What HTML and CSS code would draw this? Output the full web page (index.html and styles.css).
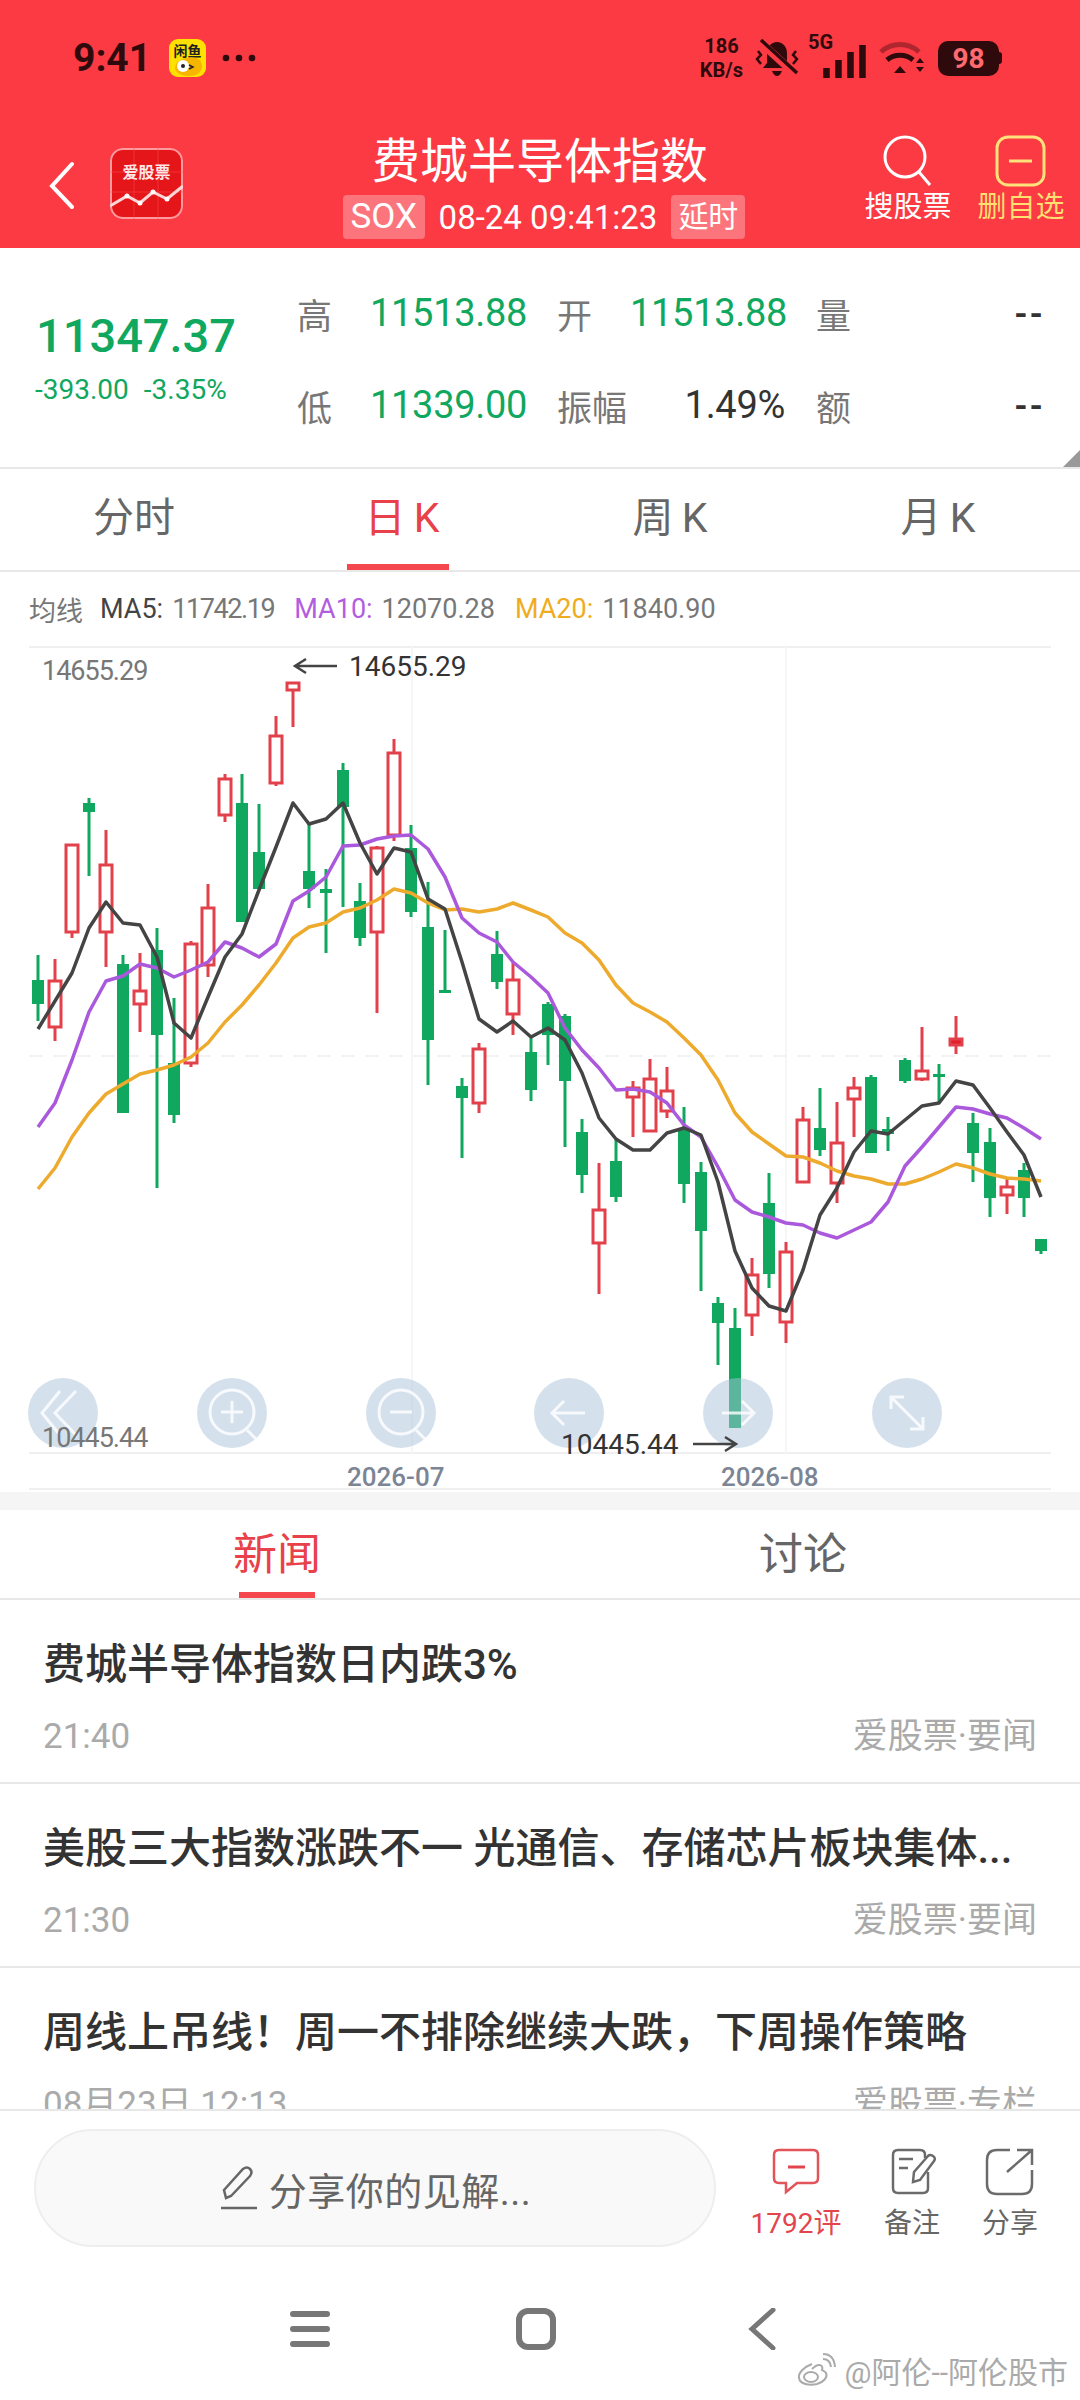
FILE: index.html

```html
<!DOCTYPE html>
<html lang="zh-CN">
<head>
    <meta charset="UTF-8">
    <meta name="viewport" content="width=device-width, initial-scale=1.0">
    <title>费城半导体指数</title>
    <link rel="stylesheet" href="styles.css">
</head>
<body>
<div class="page">
    <header class="top">
        <div class="status">
            <span class="clock">9:41</span>
            <svg class="app-icon" width="37" height="38" viewBox="0 0 37 38">
                <rect width="37" height="38" rx="9" fill="#ffe100"/>
                <text class="app-name" x="18.5" y="17">闲鱼</text>
                <path d="M6 30q0-9 11-11 9-2 14 2 4 6 0 12-3 4-12 4-10 0-13-7z" fill="#f7b500"/>
                <ellipse cx="14" cy="27" rx="6" ry="6" fill="#fff"/>
                <circle cx="14" cy="27" r="2" fill="#222"/>
                <path d="M20 26l4 2-4 2" stroke="#222" stroke-width="1.5" fill="none"/>
            </svg>
            <svg class="dots" width="34" height="8" viewBox="0 0 34 8">
                <circle cx="4" cy="4" r="3.3"/><circle cx="17" cy="4" r="3.3"/><circle cx="30" cy="4" r="3.3"/>
            </svg>
            <div class="status-right">
                <span class="speed">186<br>KB/s</span>
                <svg class="bell" width="44" height="40" viewBox="0 0 44 40">
                    <path d="M22 4c-6 0-10 5-10 11v10l-4 5h28l-4-5V15c0-6-4-11-10-11z" fill="#2f0a0c"/>
                    <path d="M17 33h10q-2 5-5 5t-5-5z" fill="#2f0a0c"/>
                    <path d="M4 3l36 33" stroke="#fb3a44" stroke-width="8"/>
                    <path d="M6 2l36 33" stroke="#2f0a0c" stroke-width="3.5"/>
                    <path d="M3 13l3 4-4 4 4 5M41 13l-3 4 4 4-4 5" stroke="#2f0a0c" stroke-width="2.5" fill="none"/>
                </svg>
                <div class="signal">
                    <span class="net">5G</span>
                    <svg width="43" height="33" viewBox="0 0 43 33">
                        <path d="M3.500 23v10M15.500 15v18M27.500 7v26M39.500 0v33" stroke="#2f0a0c" stroke-width="6.500"/>
                    </svg>
                </div>
                <svg class="wifi" width="46" height="34" viewBox="0 0 46 34">
                    <path d="M2 11a28 28 0 0 1 38 0" stroke="#b0262e" stroke-width="5" fill="none"/>
                    <path d="M8 19a20 20 0 0 1 26 0" stroke="#2f0a0c" stroke-width="5" fill="none"/>
                    <path d="M15 32l6-7 6 7z" fill="#2f0a0c"/>
                    <path d="M37 22l4-5 4 5zM37 26l4 5 4-5z" fill="#2f0a0c"/>
                </svg>
                <div class="battery"><span>98</span></div>
            </div>
        </div>
        <div class="bar">
            <div class="bar-left">
                <svg width="26" height="48" viewBox="0 0 26 48">
                    <path d="M23 3L3 25l20 21" stroke="#fff" stroke-width="4" fill="none" stroke-linecap="round"/>
                </svg>
                <div class="logo">
                    <svg class="logo-line" width="73" height="71" viewBox="0 0 73 71">
                        <path d="M0 24h73M0 44h73M24 0v71M48 0v71" stroke="#ff4a4a" stroke-width="1" opacity="0.5"/>
                        <path d="M0 58l17-10 13 7 13-11 14 7 16-13" stroke="#ffd6d6" stroke-width="3" fill="none"/>
                        <circle cx="17" cy="48" r="2.500" fill="#fff"/><circle cx="30" cy="55" r="2.500" fill="#fff"/>
                        <circle cx="43" cy="44" r="2.500" fill="#fff"/><circle cx="57" cy="51" r="2.500" fill="#fff"/>
                    </svg>
                    <span>爱股票</span>
                </div>
            </div>
            <div class="bar-title">
                <h1>费城半导体指数</h1>
                <div class="bar-meta">
                    <span class="tag tag-code">SOX</span>
                    <span class="stamp">08-24 09:41:23</span>
                    <span class="tag">延时</span>
                </div>
            </div>
            <div class="bar-actions">
                <div class="action">
                    <svg width="54" height="54" viewBox="0 0 54 54">
                        <circle cx="24" cy="23" r="20" stroke="#fff" stroke-width="3" fill="none"/>
                        <path d="M38 38l11 13" stroke="#fff" stroke-width="3"/>
                    </svg>
                    <span>搜股票</span>
                </div>
                <div class="action action-on">
                    <svg width="54" height="54" viewBox="0 0 54 54">
                        <rect x="3" y="3" width="47" height="48" rx="11" stroke="#ffe27a" stroke-width="3" fill="none"/>
                        <path d="M15 27h23" stroke="#ffe27a" stroke-width="3"/>
                    </svg>
                    <span>删自选</span>
                </div>
            </div>
        </div>
    </header>

    <section class="quote">
        <div class="price">
            <div class="price-now">11347.37</div>
            <div class="price-change"><span>-393.00</span><span>-3.35%</span></div>
        </div>
        <div class="stats">
            <span class="stat-label">高</span><span class="stat-val green">11513.88</span>
            <span class="stat-label">开</span><span class="stat-val green right">11513.88</span>
            <span class="stat-label stat-last">量</span><span class="stat-dash">--</span>
            <span class="stat-label">低</span><span class="stat-val green">11339.00</span>
            <span class="stat-label">振幅</span><span class="stat-val right">1.49%</span>
            <span class="stat-label stat-last">额</span><span class="stat-dash">--</span>
        </div>
        <i class="corner"></i>
    </section>

    <nav class="periods">
        <a>分时</a>
        <a class="on">日 K</a>
        <a>周 K</a>
        <a>月 K</a>
    </nav>

    <div class="legend">
        <span class="legend-name">均线</span>
        <span class="ma"><b>MA5:</b><span class="tight">11742.19</span></span>
        <span class="ma ma10"><b>MA10:</b><span>12070.28</span></span>
        <span class="ma ma20"><b>MA20:</b><span>11840.90</span></span>
    </div>

    <svg class="chart" width="1080" height="846" viewBox="0 646 1080 846">
        <g class="grid">
            <path d="M29 647H1051M29 1453H1051M29 1489H1051"/>
            <path class="grid-v" d="M412 647V1453M786 647V1453"/>
            <path class="grid-mid" d="M29 1056H1051"/>
        </g>

        <path class="wick-down" d="M38 955V1021M89 798V876M123 955V1113M157 928V1188M174 998V1123M242 774V922M259 804V889M309 824V908M326 869V953M343 763V907M360 883V946M411 825V917M428 882V1085M445 930V993M462 1078V1158M497 931V989M531 1036V1101M548 1002V1065M565 1014V1147M582 1119V1193M616 1140V1202M684 1107V1203M701 1162V1291M718 1297V1365M735 1308V1428M769 1173V1288M820 1088V1156M871 1075V1153M888 1117V1151M905 1058V1083M939 1064V1103M973 1113V1182M990 1128V1217M1024 1163V1217M1041 1239V1254"/>
        <g class="body-down">
            <rect x="32" y="980" width="12" height="24"/><rect x="83" y="803" width="12" height="9"/>
            <rect x="117" y="964" width="12" height="149"/><rect x="151" y="950" width="12" height="85"/>
            <rect x="168" y="1063" width="12" height="52"/><rect x="236" y="803" width="12" height="119"/>
            <rect x="253" y="852" width="12" height="37"/><rect x="303" y="871" width="12" height="18"/>
            <rect x="320" y="889" width="12" height="4"/><rect x="337" y="770" width="12" height="37"/>
            <rect x="354" y="901" width="12" height="37"/><rect x="405" y="848" width="12" height="64"/>
            <rect x="422" y="927" width="12" height="113"/><rect x="439" y="990" width="12" height="3"/>
            <rect x="456" y="1086" width="12" height="12"/><rect x="491" y="954" width="12" height="28"/>
            <rect x="525" y="1052" width="12" height="38"/><rect x="542" y="1004" width="12" height="31"/>
            <rect x="559" y="1016" width="12" height="65"/><rect x="576" y="1132" width="12" height="43"/>
            <rect x="610" y="1161" width="12" height="36"/><rect x="678" y="1128" width="12" height="56"/>
            <rect x="695" y="1172" width="12" height="59"/><rect x="712" y="1303" width="12" height="20"/>
            <rect x="729" y="1328" width="12" height="100"/><rect x="763" y="1203" width="12" height="71"/>
            <rect x="814" y="1128" width="12" height="22"/><rect x="865" y="1077" width="12" height="76"/>
            <rect x="882" y="1129" width="12" height="5"/><rect x="899" y="1060" width="12" height="21"/>
            <rect x="933" y="1074" width="12" height="3"/><rect x="967" y="1123" width="12" height="30"/>
            <rect x="984" y="1142" width="12" height="56"/><rect x="1018" y="1170" width="12" height="28"/>
            <rect x="1035" y="1239" width="12" height="12"/>
        </g>

        <path class="wick-up" d="M55 959V1041M72 932V938M106 830V967M140 953V1032M191 941V1067M208 884V977M225 774V822M276 716V786M293 682V727M377 846V1013M394 739V841M479 1043V1113M513 963V1035M599 1163V1294M633 1081V1137M650 1059V1131M667 1067V1118M752 1258V1336M786 1242V1343M803 1107V1182M837 1102V1203M854 1077V1137M922 1027V1081M956 1016V1054M1007 1177V1214"/>
        <g class="body-up">
            <rect x="49" y="981" width="12" height="46"/><rect x="66" y="845" width="12" height="87"/>
            <rect x="100" y="865" width="12" height="67"/><rect x="134" y="991" width="12" height="13"/>
            <rect x="185" y="944" width="12" height="119"/><rect x="202" y="908" width="12" height="57"/>
            <rect x="219" y="779" width="12" height="36"/><rect x="270" y="736" width="12" height="47"/>
            <rect x="287" y="683" width="12" height="7"/><rect x="371" y="848" width="12" height="84"/>
            <rect x="388" y="753" width="12" height="82"/><rect x="473" y="1049" width="12" height="54"/>
            <rect x="507" y="980" width="12" height="34"/><rect x="593" y="1210" width="12" height="33"/>
            <rect x="627" y="1088" width="12" height="9"/><rect x="644" y="1079" width="12" height="52"/>
            <rect x="661" y="1091" width="12" height="20"/><rect x="746" y="1275" width="12" height="40"/>
            <rect x="780" y="1252" width="12" height="70"/><rect x="797" y="1120" width="12" height="62"/>
            <rect x="831" y="1143" width="12" height="40"/><rect x="848" y="1088" width="12" height="11"/>
            <rect x="916" y="1071" width="12" height="8"/><rect x="1001" y="1187" width="12" height="8"/>
            <rect class="solid" x="950" y="1039" width="12" height="6"/>
        </g>

        <polyline class="line-ma20" points="38,1189 55,1168 72,1137 89,1113 106,1094 123,1084 140,1074 157,1070 174,1065 191,1057 208,1043 225,1022 242,1005 259,985 276,963 293,938 309,927 326,923 343,912 360,908 377,900 394,889 411,893 428,903 445,910 462,909 479,912 497,909 513,903 531,910 548,917 565,933 582,943 599,960 616,985 633,1003 650,1012 667,1022 684,1038 701,1055 718,1080 735,1113 752,1132 769,1144 786,1156 803,1157 820,1163 837,1171 854,1176 871,1179 888,1184 905,1184 922,1179 939,1172 956,1164 973,1168 990,1174 1007,1178 1024,1179 1041,1181"/>
        <polyline class="line-ma10" points="38,1127 55,1103 72,1060 89,1012 106,981 123,976 140,964 157,968 174,977 191,970 208,962 225,942 242,948 259,957 276,944 293,901 309,891 326,877 343,846 360,845 377,839 394,836 411,835 428,849 445,877 462,918 479,933 497,942 513,962 531,977 548,993 565,1028 582,1050 599,1068 616,1090 633,1089 650,1092 667,1103 684,1125 701,1137 718,1167 735,1200 752,1212 769,1217 786,1223 803,1225 820,1233 837,1238 854,1230 871,1222 888,1202 905,1166 922,1147 939,1127 956,1107 973,1109 990,1114 1007,1118 1024,1128 1041,1139"/>
        <polyline class="line-ma5" points="38,1029 72,973 89,928 106,902 123,923 140,925 157,957 174,1023 191,1038 208,997 225,957 242,934 259,890 276,847 293,803 309,824 326,819 343,803 360,843 377,874 394,848 411,852 428,899 445,909 462,962 479,1019 497,1032 513,1021 531,1037 548,1028 565,1040 582,1073 599,1118 616,1139 633,1150 650,1150 667,1133 684,1128 701,1135 718,1182 735,1251 752,1288 769,1306 786,1311 803,1270 820,1215 837,1188 854,1152 871,1131 888,1134 905,1120 922,1106 939,1103 956,1081 973,1085 990,1108 1007,1132 1024,1155 1041,1197"/>

        <g class="tool">
            <circle cx="63" cy="1413" r="35"/>
            <path d="M76 1391l-21 22 21 22M60 1391l-18 22 18 22"/>
            <circle cx="232" cy="1413" r="35"/>
            <circle cx="232" cy="1412" r="22"/>
            <path d="M232 1401v22M221 1412h22M247 1430l9 9"/>
            <circle cx="401" cy="1413" r="35"/>
            <circle cx="401" cy="1412" r="22"/>
            <path d="M390 1412h22M416 1430l9 9"/>
            <circle cx="569" cy="1413" r="35"/>
            <path d="M585 1413h-32M564 1401l-12 12 12 12"/>
            <circle cx="738" cy="1413" r="35"/>
            <path d="M722 1413h32M742 1401l12 12-12 12"/>
            <circle cx="907" cy="1413" r="35"/>
            <path d="M891 1397l32 32M891 1409v-12h13M923 1417v12h-13"/>
        </g>

        <text class="axis" x="42" y="680">14655.29</text>
        <text class="axis" x="42" y="1447">10445.44</text>
        <text class="extreme" x="349" y="676">14655.29</text>
        <path class="arrow" d="M337 666H295M306 659l-11 7 11 7"/>
        <text class="extreme" x="561" y="1454">10445.44</text>
        <path class="arrow" d="M693 1444H736M725 1437l11 7-11 7"/>
        <text class="date" x="347" y="1486">2026-07</text>
        <text class="date" x="721" y="1486">2026-08</text>
    </svg>

    <div class="band"></div>

    <nav class="news-tabs">
        <a class="on">新闻</a>
        <a>讨论</a>
    </nav>

    <div class="news">
        <article class="item">
            <h3>费城半导体指数日内跌3%</h3>
            <div class="item-meta"><span>21:40</span><span>爱股票·要闻</span></div>
        </article>
        <article class="item">
            <h3>美股三大指数涨跌不一 光通信、存储芯片板块集体...</h3>
            <div class="item-meta"><span>21:30</span><span>爱股票·要闻</span></div>
        </article>
        <article class="item">
            <h3>周线上吊线！周一不排除继续大跌，下周操作策略</h3>
            <div class="item-meta"><span>08月23日 12:13</span><span>爱股票·专栏</span></div>
        </article>
    </div>

    <footer class="foot">
        <div class="foot-row">
            <div class="ask">
                <svg width="40" height="46" viewBox="0 0 40 46">
                    <path d="M7 33L5 25 24 4q4-3 7 0t0 7L12 31z" stroke="#666" stroke-width="2.500" fill="none"/>
                    <path d="M2 43h36" stroke="#666" stroke-width="2.500"/>
                </svg>
                <span>分享你的见解...</span>
            </div>
            <div class="foot-btn foot-red">
                <svg width="50" height="48" viewBox="0 0 50 48">
                    <path d="M8 2H42q5 0 5 5V30q0 5-5 5H26L15 44V35H8q-5 0-5-5V7q0-5 5-5z" stroke="#e2545a" stroke-width="2.500" fill="none"/>
                    <path d="M17 19H34" stroke="#e2454c" stroke-width="3"/>
                </svg>
                <span>1792评</span>
            </div>
            <div class="foot-btn">
                <svg width="50" height="48" viewBox="0 0 50 48">
                    <path d="M38 10V7q0-5-5-5H11Q6 2 6 7v33q0 5 5 5h25q5 0 5-5V24" stroke="#6b6b6b" stroke-width="2.500" fill="none"/>
                    <path d="M12 11H26M12 20H21" stroke="#6b6b6b" stroke-width="2.500"/>
                    <path d="M26 34l1-10L41 8q2-2 5 0t1 5L33 32z" stroke="#6b6b6b" stroke-width="2.500" fill="#fff"/>
                </svg>
                <span>备注</span>
            </div>
            <div class="foot-btn">
                <svg width="50" height="48" viewBox="0 0 50 48">
                    <path d="M25 2H12Q2 2 2 12V36Q2 46 12 46H37Q47 46 47 36V22" stroke="#6b6b6b" stroke-width="2.500" fill="none"/>
                    <path d="M22 24L47 2M32 2H47V17" stroke="#6b6b6b" stroke-width="2.500" fill="none"/>
                </svg>
                <span>分享</span>
            </div>
        </div>
        <div class="sys-nav">
            <svg width="40" height="38" viewBox="0 0 40 38">
                <path d="M3 4h34M3 19h34M3 34h34" stroke="#777" stroke-width="6" stroke-linecap="round"/>
            </svg>
            <svg width="40" height="42" viewBox="0 0 40 42">
                <rect x="3" y="3" width="34" height="36" rx="9" stroke="#777" stroke-width="6" fill="none"/>
            </svg>
            <svg width="28" height="42" viewBox="0 0 28 42">
                <path d="M25 2L4 21l21 19" stroke="#777" stroke-width="5" fill="none" stroke-linecap="round"/>
            </svg>
        </div>
    </footer>

    <div class="mark">
        <svg width="40" height="34" viewBox="0 0 40 34">
            <path d="M16 11C8 14 2 20 3 25c1 6 10 8 18 6 7-2 11-7 9-11-1-2-3-2-4-3 1-3 0-5-3-5-2 0-5 2-7 4" stroke="#aaa" stroke-width="2" fill="#fff"/>
            <ellipse cx="15" cy="24" rx="7" ry="5" stroke="#aaa" stroke-width="2" fill="none"/>
            <path d="M27 6q7 0 8 8M27 1q11 0 12 13" stroke="#aaa" stroke-width="2" fill="none"/>
        </svg>
        <span>@阿伦--阿伦股市</span>
    </div>
</div>
</body>
</html>
```

FILE: styles.css

```css
* {
    box-sizing: border-box;
}
body {
    margin: 0;
    background: #fff;
    font-family: Roboto, "Noto Sans CJK SC", sans-serif;
    color: #333;
}
.page {
    position: relative;
    width: 1080px;
    height: 2400px;
    overflow: hidden;
    display: flex;
    flex-direction: column;
}

/* red header */
.top {
    height: 248px;
    background: #fb3a44;
    color: #fff;
}
.status {
    height: 116px;
    padding: 0 81px 0 73px;
    display: flex;
    align-items: center;
    color: #2f0a0c;
}
.clock {
    font-size: 39px;
    font-weight: 700;
    margin-right: 18px;
}
.app-name {
    font-size: 14px;
    font-weight: 700;
    text-anchor: middle;
    fill: #222;
}
.dots {
    margin-left: 16px;
    fill: #2f0a0c;
}
.status-right {
    margin-left: auto;
    display: flex;
    align-items: center;
    gap: 9px;
}
.speed {
    font-size: 20px;
    font-weight: 700;
    line-height: 24px;
    text-align: center;
}
.bell {
    margin-left: 3px;
}
.signal {
    position: relative;
    width: 58px;
    height: 40px;
    display: flex;
    align-items: flex-end;
    justify-content: flex-end;
}
.net {
    position: absolute;
    left: 0;
    top: -8px;
    font-size: 20px;
    font-weight: 700;
}
.wifi {
    margin: 0 4px;
}
.battery {
    position: relative;
    width: 61px;
    height: 35px;
    border-radius: 10px;
    background: #2f0a0c;
    color: #ff6a70;
    font-size: 28px;
    font-weight: 700;
    line-height: 35px;
    text-align: center;
}
.battery::after {
    content: "";
    position: absolute;
    right: -3px;
    top: 11px;
    width: 3px;
    height: 12px;
    border-radius: 0 3px 3px 0;
    background: #2f0a0c;
}
.bar {
    height: 132px;
    display: grid;
    grid-template-columns: 1fr auto 1fr;
}
.bar-left {
    padding: 32px 0 0 49px;
    display: flex;
    align-items: flex-start;
    gap: 35px;
}
.bar-left > svg {
    margin-top: 13px;
}
.logo {
    position: relative;
    width: 73px;
    height: 71px;
    border-radius: 13px;
    background: #e5161b;
    box-shadow: inset 0 0 0 2px #ff9a9e;
    overflow: hidden;
    font-size: 16px;
    font-weight: 700;
    color: #ffe6e6;
    text-align: center;
    padding-top: 14px;
    line-height: 22px;
}
.logo-line {
    position: absolute;
    left: 0;
    top: 0;
}
.logo span {
    position: relative;
}
.bar-title {
    text-align: center;
}
.bar-title h1 {
    margin: 0;
    padding-top: 19px;
    font-size: 48px;
    font-weight: 400;
    line-height: 54px;
}
.bar-meta {
    margin-top: 6px;
    padding-left: 8px;
    display: flex;
    align-items: center;
    justify-content: center;
    gap: 14px;
}
.tag {
    width: 74px;
    height: 44px;
    border-radius: 4px;
    background: rgba(255, 255, 255, 0.3);
    font-size: 30px;
    line-height: 44px;
    text-align: center;
}
.tag-code {
    width: 82px;
    font-size: 35px;
}
.stamp {
    font-size: 33px;
}
.bar-actions {
    display: flex;
    justify-content: flex-end;
    padding: 18px 15px 0 0;
    gap: 25px;
}
.action {
    width: 88px;
    display: flex;
    flex-direction: column;
    align-items: center;
    font-size: 29px;
    line-height: 38px;
    white-space: nowrap;
}
.action-on {
    color: #ffdf70;
}

/* quote block */
.quote {
    position: relative;
    height: 221px;
    display: flex;
    border-bottom: 2px solid #e8e8e8;
}
.price {
    width: 297px;
    padding: 58px 0 0 36px;
}
.price-now {
    font-size: 47px;
    font-weight: 500;
    line-height: 60px;
    color: #10a75e;
}
.price-change {
    margin-top: 8px;
    margin-left: -1px;
    display: flex;
    gap: 15px;
    font-size: 28px;
    line-height: 32px;
    color: #10a75e;
}
.stats {
    padding-top: 35px;
    display: grid;
    grid-template-columns: 73px 187px 73px 155px 31px 36px 193px;
    grid-auto-rows: 60px;
    row-gap: 32px;
    align-items: center;
    width: 750px;
}
.stat-label {
    font-size: 35px;
    color: #777;
    white-space: nowrap;
}
.stat-val {
    font-size: 38px;
    letter-spacing: -0.3px;
    color: #333;
}
.stat-last {
    grid-column: 6;
}
.stat-dash {
    font-size: 34px;
    font-weight: 700;
    letter-spacing: 2px;
    text-align: right;
    color: #333;
}
.green {
    color: #10a75e;
}
.right {
    text-align: right;
}
.corner {
    position: absolute;
    right: 0;
    bottom: 0;
    border-style: solid;
    border-width: 0 0 17px 17px;
    border-color: transparent transparent #999 transparent;
}

/* period tabs */
.periods {
    height: 103px;
    display: flex;
    border-bottom: 2px solid #e8e8e8;
}
.periods a {
    position: relative;
    width: 268px;
    text-align: center;
    font-size: 41px;
    line-height: 98px;
    color: #666;
    word-spacing: -2px;
}
.periods .on {
    color: #e8414a;
}
.periods .on::after {
    content: "";
    position: absolute;
    left: 79px;
    bottom: 0;
    width: 102px;
    height: 6px;
    background: #f5474e;
}

/* moving average legend */
.legend {
    height: 74px;
    padding: 0 0 0 29px;
    display: flex;
    align-items: center;
    font-size: 27px;
    color: #777;
}
.legend-name {
    width: 71px;
}
.ma {
    margin-right: 20px;
}
.ma b {
    font-weight: 400;
    color: #444;
    margin-right: 9px;
}
.ma .tight {
    letter-spacing: -1.4px;
}
.ma10 b {
    color: #b25de0;
}
.ma20 b {
    color: #f0ac20;
}

/* chart */
.chart {
    display: block;
    flex: none;
}
.grid path {
    stroke: #efefef;
    stroke-width: 2;
    fill: none;
}
.grid .grid-v {
    stroke: #f6f6f6;
}
.grid .grid-mid {
    stroke: #f3f3f3;
    stroke-dasharray: 14 10;
}
.wick-down {
    stroke: #10a75e;
    stroke-width: 3;
    fill: none;
}
.body-down {
    fill: #10a75e;
}
.wick-up {
    stroke: #e2404a;
    stroke-width: 3;
    fill: none;
}
.body-up {
    fill: #fff;
    stroke: #e2404a;
    stroke-width: 3;
}
.body-up .solid {
    fill: #e2202a;
}
.line-ma5,
.line-ma10,
.line-ma20 {
    fill: none;
    stroke-width: 3.5;
    stroke-linejoin: round;
}
.line-ma5 {
    stroke: #444;
}
.line-ma10 {
    stroke: #aa58dc;
}
.line-ma20 {
    stroke: #eeaa2c;
}
.tool circle {
    fill: rgba(170, 195, 220, 0.5);
}
.tool circle + circle {
    fill: none;
    stroke: #fff;
    stroke-width: 3;
    opacity: 0.8;
}
.tool path {
    stroke: #fff;
    stroke-width: 3;
    fill: none;
    opacity: 0.8;
}
.axis {
    font-size: 27px;
    letter-spacing: -1px;
    fill: #777;
}
.extreme {
    font-size: 28px;
    fill: #333;
}
.arrow {
    stroke: #444;
    stroke-width: 2.5;
    fill: none;
}
.date {
    font-size: 26px;
    font-weight: 500;
    fill: #7b8594;
}
.band {
    height: 18px;
    background: #f5f5f5;
    flex: none;
}

/* news */
.news-tabs {
    height: 90px;
    flex: none;
    display: flex;
    border-bottom: 2px solid #e8e8e8;
}
.news-tabs a {
    position: relative;
    flex: 1;
    text-align: center;
    font-size: 44px;
    line-height: 90px;
    color: #666;
    padding-right: 28px;
}
.news-tabs .on {
    color: #e8414a;
    flex: none;
    width: 554px;
    padding-right: 0;
}
.news-tabs .on::after {
    content: "";
    position: absolute;
    left: 239px;
    bottom: 0;
    width: 76px;
    height: 6px;
    background: #f5474e;
}
.news {
    flex: 1;
    min-height: 0;
    overflow: hidden;
}
.item {
    height: 184px;
    padding: 36px 43px 0;
    border-bottom: 2px solid #e8e8e8;
}
.item h3 {
    margin: 0;
    font-size: 42px;
    font-weight: 500;
    line-height: 58px;
    color: #333;
    white-space: nowrap;
}
.item-meta {
    margin-top: 21px;
    display: flex;
    justify-content: space-between;
    font-size: 35px;
    line-height: 44px;
    color: #aaa;
}

/* bottom bar */
.foot {
    height: 291px;
    flex: none;
    border-top: 2px solid #e8e8e8;
    background: #fff;
}
.foot-row {
    height: 197px;
    padding: 18px 0 0 34px;
    display: flex;
    align-items: flex-start;
}
.ask {
    width: 682px;
    height: 118px;
    border: 2px solid #eee;
    border-radius: 59px;
    background: #f9f9f9;
    display: flex;
    align-items: center;
    justify-content: center;
    gap: 10px;
    font-size: 38px;
    letter-spacing: 0.5px;
    color: #666;
    margin-right: 32px;
}
.foot-btn {
    width: 98px;
    padding-top: 19px;
    display: flex;
    flex-direction: column;
    align-items: center;
    font-size: 28px;
    line-height: 40px;
    color: #666;
    white-space: nowrap;
    gap: 8px;
}
.foot-red {
    width: 96px;
    margin-right: 19px;
    color: #e2454c;
}
.sys-nav {
    padding-left: 290px;
    display: flex;
    align-items: center;
    gap: 186px;
}
.sys-nav svg:last-child {
    margin-left: 6px;
}
.mark {
    position: absolute;
    right: 12px;
    bottom: 8px;
    display: flex;
    align-items: center;
    gap: 8px;
    font-size: 30px;
    color: #aaa;
    text-shadow: 0 0 2px #fff;
}
```
